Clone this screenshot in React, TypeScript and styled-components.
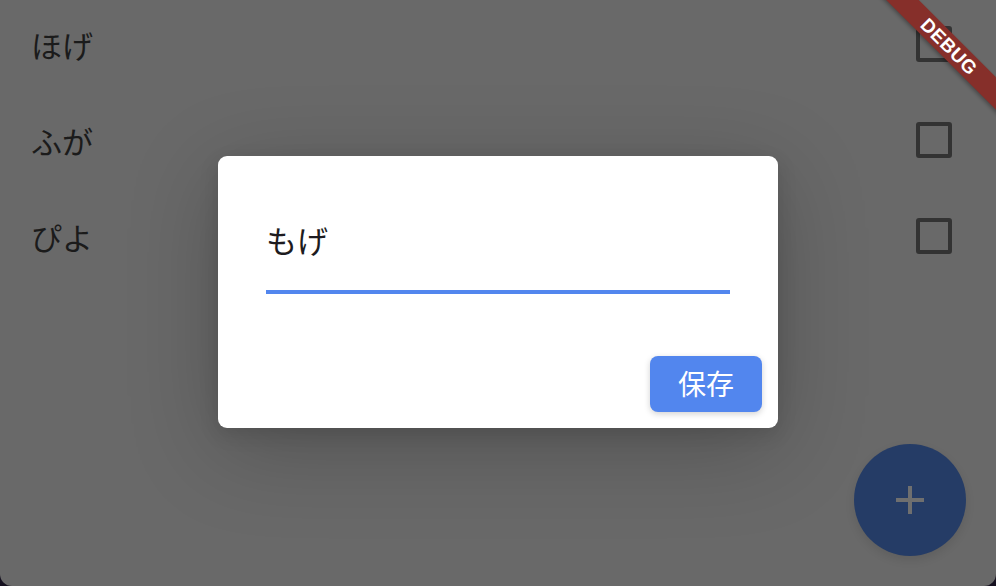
import React from "react";
import styled, { createGlobalStyle } from "styled-components";

const Global = createGlobalStyle`
  html, body { margin: 0; padding: 0; background: #15101f; }
  body { width: 996px; height: 586px; overflow: hidden; font-family: "Noto Sans CJK JP", "Noto Sans", sans-serif; }
  #root { width: 996px; height: 586px; }
`;

const Screen = styled.div`
  position: relative;
  width: 996px;
  height: 586px;
  background: #696969;
  border-radius: 0 0 12px 12px;
  overflow: hidden;
`;

const List = styled.div`
  display: flex;
  flex-direction: column;
  margin-top: -4px;
`;

const Row = styled.div`
  height: 96px;
  display: flex;
  align-items: center;
  justify-content: space-between;
  padding: 0 44px 0 31px;
`;

const Title = styled.span`
  font-size: 31px;
  color: #1b1b1b;
  line-height: 1;
`;

const Check = styled.div`
  width: 36px;
  height: 36px;
  box-sizing: border-box;
  border: 4px solid #333333;
  border-radius: 3px;
`;

const Barrier = styled.div`
  position: absolute;
  inset: 0 0 2px 0;
  display: flex;
  align-items: center;
  justify-content: center;
`;

const Dialog = styled.div`
  width: 560px;
  height: 272px;
  background: #ffffff;
  border-radius: 9px;
  box-shadow: 0 20px 90px rgba(0, 0, 0, 0.22), 0 6px 20px rgba(0, 0, 0, 0.12);
  display: flex;
  flex-direction: column;
  box-sizing: border-box;
  padding-top: 48px;
`;

const Field = styled.div`
  margin: 0 48px;
  border-bottom: 4px solid #5286ee;
  display: flex;
  align-items: flex-start;
  padding-top: 20px;
  height: 66px;
`;

const FieldText = styled.span`
  font-size: 31px;
  line-height: 1;
  color: #1d1b20;
`;

const Actions = styled.div`
  display: flex;
  justify-content: flex-end;
  padding: 62px 16px 16px;
`;

const SaveButton = styled.button`
  width: 112px;
  height: 56px;
  border: none;
  border-radius: 8px;
  background: #5286ee;
  color: #ffffff;
  font-family: "Noto Sans CJK JP", sans-serif;
  font-size: 28px;
  line-height: 1;
  padding: 0 0 2px;
  box-shadow: 0 2px 6px rgba(0, 0, 0, 0.18);
`;

const Fab = styled.div`
  position: absolute;
  right: 30px;
  bottom: 30px;
  width: 112px;
  height: 112px;
  border-radius: 50%;
  background: #253c66;
  display: flex;
  align-items: center;
  justify-content: center;
  box-shadow: 0 4px 10px rgba(0, 0, 0, 0.1);
`;

const Banner = styled.div`
  position: absolute;
  top: 46px;
  left: 949px;
  width: 170px;
  height: 23px;
  margin: -11.5px 0 0 -85px;
  transform: rotate(45deg);
  background: #862f2a;
  box-shadow: 0 2px 4px rgba(0, 0, 0, 0.3);
  display: flex;
  align-items: center;
  justify-content: center;
  color: #ffffff;
  font-family: "Liberation Sans", Arial, sans-serif;
  font-weight: 700;
  font-size: 19px;
  letter-spacing: 0.5px;
  line-height: 1;
`;

const items = ["ほげ", "ふが", "ぴよ"];

export default function App() {
  return (
    <>
      <Global />
      <Screen>
        <List>
          {items.map((t) => (
            <Row key={t}>
              <Title>{t}</Title>
              <Check />
            </Row>
          ))}
        </List>
        <Fab>
          <svg width="32" height="32" viewBox="0 0 32 32">
            <path d="M16 2v28M2 16h28" stroke="#6f6f6f" strokeWidth="4" />
          </svg>
        </Fab>
        <Barrier>
          <Dialog>
            <Field>
              <FieldText>もげ</FieldText>
            </Field>
            <Actions>
              <SaveButton>保存</SaveButton>
            </Actions>
          </Dialog>
        </Barrier>
        <Banner>DEBUG</Banner>
      </Screen>
    </>
  );
}
